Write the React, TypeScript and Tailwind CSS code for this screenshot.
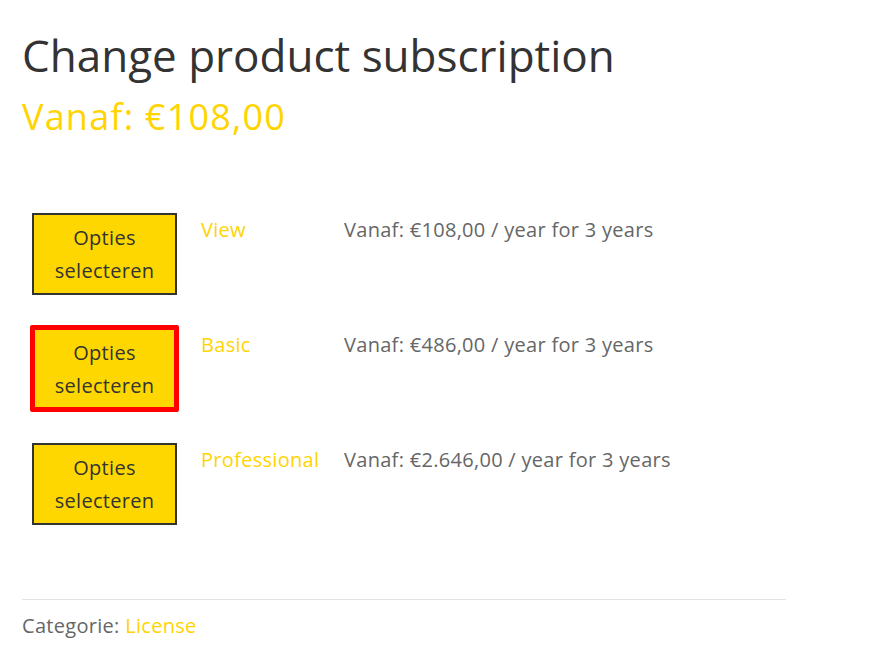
const variations = [
  { name: "View", price: "Vanaf: €108,00 / year for 3 years", highlighted: false },
  { name: "Basic", price: "Vanaf: €486,00 / year for 3 years", highlighted: true },
  { name: "Professional", price: "Vanaf: €2.646,00 / year for 3 years", highlighted: false },
];

const App = () => {
  return (
    <div className="min-h-[671px] bg-white pl-[22px] pt-[29px] font-['Open_Sans',sans-serif]">
      <h1 className="text-[44px] font-normal leading-[1.2] text-[#333]">
        Change product subscription
      </h1>
      <p className="mt-[13px] text-[36px] leading-[1.2] tracking-[1.2px] text-[#ffd400]">
        Vanaf: €108,00
      </p>

      <div className="mt-[75px] w-[764px] text-[20px] tracking-[0.3px]">
        {variations.map((v) => (
          <div key={v.name} className="flex h-[115px] items-start pl-[10px]">
            <div className="relative">
              <button className="flex h-[82px] w-[145px] flex-col items-center justify-center border-2 border-[#333] bg-[#ffd700] leading-[33px] tracking-[0.3px] text-[#333]">
                <span>Opties</span>
                <span>selecteren</span>
              </button>
              {v.highlighted && (
                <div className="absolute -top-[3px] -bottom-[2px] -left-[2px] -right-[2px] rounded-[2px] border-[5px] border-[#ff0000]" />
              )}
            </div>
            <a className="ml-[24px] w-[143px] pt-[3px] leading-[28px] text-[#ffd400]">{v.name}</a>
            <span className="pt-[3px] leading-[28px] text-[#666]">{v.price}</span>
          </div>
        ))}
      </div>

      <div className="mt-[41px] w-[764px] border-t border-[#e2e2e2] pt-[12px] text-[20px] leading-[28px] tracking-[0.3px] text-[#666]">
        Categorie: <a className="text-[#ffd400]">License</a>
      </div>
    </div>
  );
};

export default App;
